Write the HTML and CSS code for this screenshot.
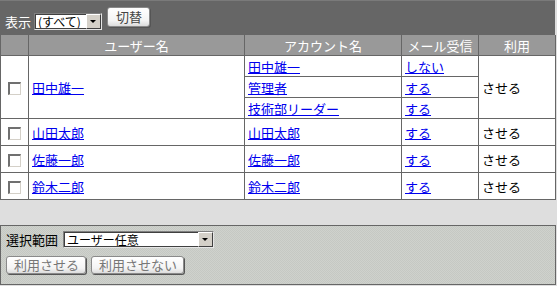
FILE: index.html
```html
<!DOCTYPE html>
<html lang="ja">
<head>
    <meta charset="UTF-8">
    <title>ユーザー一覧</title>
    <link rel="stylesheet" href="styles.css">
</head>
<body>
    <div class="toolbar">
        <span class="label">表示</span>
        <span class="select small">
            <span class="select-text">(すべて)</span>
            <span class="select-arrow"></span>
        </span>
        <button class="btn btn-top">切替</button>
    </div>

    <table class="users">
        <colgroup>
            <col class="c-check">
            <col class="c-user">
            <col class="c-account">
            <col class="c-mail">
            <col class="c-use">
        </colgroup>
        <thead>
            <tr>
                <th></th>
                <th>ユーザー名</th>
                <th>アカウント名</th>
                <th>メール受信</th>
                <th>利用</th>
            </tr>
        </thead>
        <tbody>
            <tr class="sub">
                <td rowspan="3" class="center"><input type="checkbox"></td>
                <td rowspan="3"><a href="#">田中雄一</a></td>
                <td><a href="#">田中雄一</a></td>
                <td><a href="#">しない</a></td>
                <td rowspan="3">させる</td>
            </tr>
            <tr class="sub">
                <td><a href="#">管理者</a></td>
                <td><a href="#">する</a></td>
            </tr>
            <tr class="sub">
                <td><a href="#">技術部リーダー</a></td>
                <td><a href="#">する</a></td>
            </tr>
            <tr class="row">
                <td class="center"><input type="checkbox"></td>
                <td><a href="#">山田太郎</a></td>
                <td><a href="#">山田太郎</a></td>
                <td><a href="#">する</a></td>
                <td>させる</td>
            </tr>
            <tr class="row">
                <td class="center"><input type="checkbox"></td>
                <td><a href="#">佐藤一郎</a></td>
                <td><a href="#">佐藤一郎</a></td>
                <td><a href="#">する</a></td>
                <td>させる</td>
            </tr>
            <tr class="row">
                <td class="center"><input type="checkbox"></td>
                <td><a href="#">鈴木二郎</a></td>
                <td><a href="#">鈴木二郎</a></td>
                <td><a href="#">する</a></td>
                <td>させる</td>
            </tr>
        </tbody>
    </table>

    <div class="panel">
        <div class="panel-row">
            <span class="label dark">選択範囲</span>
            <span class="select wide">
                <span class="select-text">ユーザー任意</span>
                <span class="select-arrow"></span>
            </span>
        </div>
        <div class="panel-row buttons">
            <button class="btn">利用させる</button>
            <button class="btn">利用させない</button>
        </div>
    </div>
</body>
</html>
```

FILE: styles.css
```css
body {
    margin: 0;
    padding: 0;
    width: 557px;
    height: 286px;
    overflow: hidden;
    background-color: #dedede;
    font-family: "Noto Sans CJK JP", "Liberation Sans", sans-serif;
    font-size: 12px;
    color: #000;
}
.toolbar {
    width: 555px;
    height: 35px;
    box-sizing: border-box;
    background-color: #666666;
    border-top: 1px solid #7a7a7a;
    display: flex;
    align-items: flex-end;
    padding: 0 0 5px 5px;
}
.label {
    color: #fff;
    line-height: 16px;
    font-size: 13px;
    margin-right: 3px;
}
.label.dark {
    color: #000;
}
.select {
    display: inline-flex;
    align-items: stretch;
    height: 17px;
    box-sizing: border-box;
    background-color: #fff;
    border-top: 1px solid #808080;
    border-left: 1px solid #808080;
    border-right: 1px solid #e6e6e6;
    border-bottom: 1px solid #e6e6e6;
    outline: 1px solid #404040;
    outline-offset: -2px;
}
.select.small {
    width: 68px;
}
.select.wide {
    width: 151px;
    height: 17px;
}
.select-text {
    flex: 1;
    font-size: 12px;
    line-height: 15px;
    padding-left: 3px;
    white-space: nowrap;
}
.select-arrow {
    width: 15px;
    flex: none;
    box-sizing: border-box;
    background-color: #d4d0c8;
    border-top: 1px solid #fff;
    border-left: 1px solid #fff;
    border-right: 1px solid #404040;
    border-bottom: 1px solid #404040;
    position: relative;
}
.select-arrow::after {
    content: "";
    position: absolute;
    left: 3px;
    top: 5px;
    border-left: 3px solid transparent;
    border-right: 3px solid transparent;
    border-top: 3px solid #000;
}
.btn {
    font-family: inherit;
    font-size: 13px;
    color: #777;
    background: linear-gradient(#ffffff, #f4f4f4 70%, #dcdcdc);
    border: 1px solid #8a8a8a;
    border-radius: 3px;
    box-shadow: 1px 1px 0 #555;
    padding: 0 6px 0 7px;
    height: 18px;
    line-height: 16px;
    cursor: pointer;
}
.btn-top {
    margin-left: 5px;
    align-self: flex-start;
    margin-top: 6px;
    height: 20px;
    padding: 0 7px 0 8px;
    color: #444;
}
.users {
    width: 555px;
    border-collapse: collapse;
    table-layout: fixed;
    background-color: #fff;
}
.users col.c-check { width: 28px; }
.users col.c-user { width: 216px; }
.users col.c-account { width: 157px; }
.users col.c-mail { width: 77px; }
.users col.c-use { width: 77px; }
.users th {
    background-color: #999999;
    color: #fff;
    font-weight: normal;
    font-size: 13px;
    height: 20px;
    padding: 0;
    border: 1px solid #666;
    border-top: none;
}
.users td {
    border: 1px solid #666;
    padding: 0 3px;
    font-size: 13px;
    white-space: nowrap;
}
.users tr.sub td {
    height: 20px;
}
.users tr.row td {
    height: 26px;
}
.users .center {
    text-align: center;
    padding: 0;
}
a {
    color: #0000ee;
}
input[type="checkbox"] {
    appearance: none;
    width: 13px;
    height: 13px;
    margin: 0;
    vertical-align: middle;
    box-sizing: border-box;
    background-color: #fff;
    border-top: 2px solid #707070;
    border-left: 2px solid #707070;
    border-right: 1px solid #d4d0c8;
    border-bottom: 1px solid #d4d0c8;
}
.panel {
    width: 556px;
    height: 60px;
    margin-top: 25px;
    box-sizing: border-box;
    border: 1px solid #666;
    background-color: #c9ccc7;
    background-image: repeating-conic-gradient(#c5c8c3 0 25%, #cfd2cd 0 50%);
    background-size: 2px 2px;
    padding: 5px 0 0 5px;
    display: flex;
    flex-direction: column;
    gap: 8px;
}
.panel-row {
    display: flex;
    align-items: center;
}
.panel-row .label {
    margin-right: 5px;
}
.buttons {
    gap: 5px;
}
```
